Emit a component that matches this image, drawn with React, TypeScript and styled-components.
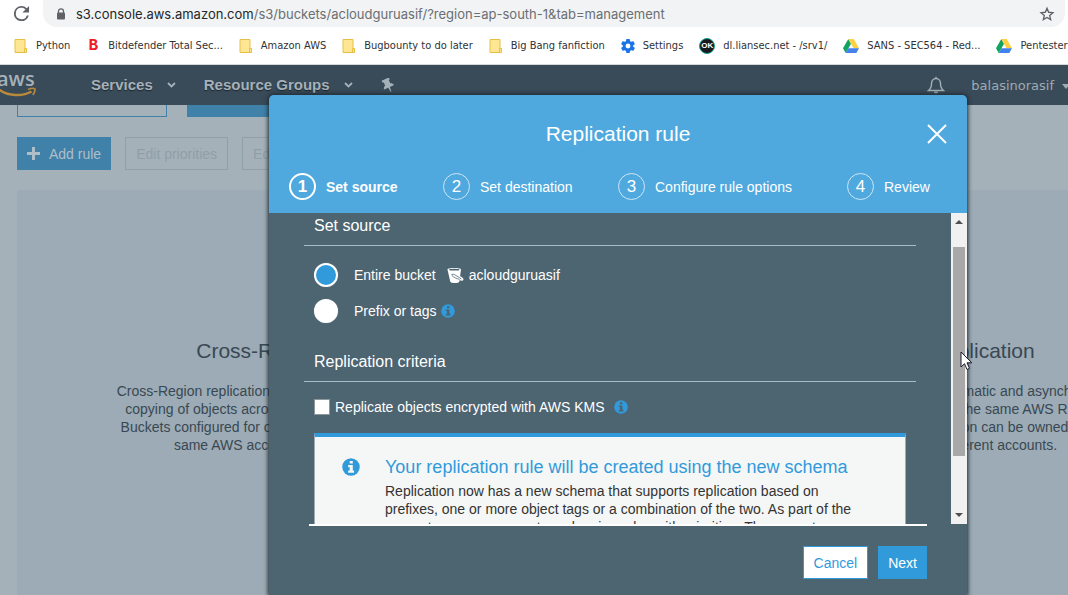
import React from "react";
import styled, { createGlobalStyle } from "styled-components";

const Global = createGlobalStyle`
  *, *::before, *::after { box-sizing: border-box; }
  html, body, #root { height: 100%; }
  body {
    margin: 0;
    overflow: hidden;
    font: 14px/18px "Liberation Sans", Arial, sans-serif;
  }
  h1, h2, h3, p, ul, ol { margin: 0; padding: 0; font-weight: 400; }
  button { font: inherit; cursor: pointer; }
`;

/* ---------- browser chrome ---------- */

const Browser = styled.div`
  display: flex;
  flex-direction: column;
  height: 100%;
  background: #fff;
  font-family: "DejaVu Sans Condensed", "Noto Sans", sans-serif;
`;
const AddressRow = styled.div`
  display: flex;
  align-items: center;
  flex: none;
  height: 27px;
  padding: 0 3px 0 12px;
  gap: 13px;
`;
const IconButton = styled.button`
  display: flex;
  padding: 0;
  border: 0;
  background: none;
  color: inherit;
`;
const AddressBar = styled.div`
  display: flex;
  align-items: center;
  flex: 1;
  height: 27px;
  padding: 0 10px 0 13px;
  gap: 10px;
  border-radius: 0 0 14px 14px;
  background: #f1f3f4;
`;
const Url = styled.div`
  flex: 1;
  white-space: nowrap;
  font-family: Inter, "Noto Sans", sans-serif;
  font-size: 13px;
  line-height: 20px;
  color: #6b6e72;
  b { font-weight: 400; color: #25272a; }
`;
const Bookmarks = styled.nav`
  display: flex;
  flex: none;
  align-items: center;
  height: 38px;
  padding-left: 14px;
  gap: 16px;
  border-bottom: 1px solid #d6d8da;
  overflow: hidden;
`;
const Bookmark = styled.a`
  display: flex;
  flex: none;
  align-items: center;
  gap: 8px;
  font-size: 11px;
  line-height: 16px;
  white-space: nowrap;
  color: #303236;
  text-decoration: none;
  svg { flex: none; }
`;

/* ---------- console page ---------- */

const Console = styled.div`
  position: relative;
  display: flex;
  flex: 1;
  flex-direction: column;
  min-height: 0;
  overflow: hidden;
  background: #a4b1b8;
  font-family: "Liberation Sans", Arial, sans-serif;
`;
const NavBar = styled.header`
  display: flex;
  flex: none;
  align-items: center;
  height: 40px;
  background: #394a58;
  color: #a5b1b9;
`;
const NavItem = styled.button`
  display: flex;
  align-items: center;
  padding: 0;
  gap: 14px;
  border: 0;
  background: none;
  color: inherit;
  font-size: 15px;
  font-weight: 700;
  text-shadow: 0 1px 1px #1d2630;
`;
const NavLinks = styled.nav`
  display: flex;
  align-items: center;
  flex: 1;
  margin-left: 54px;
  gap: 28px;
`;
const Account = styled.button`
  display: flex;
  align-items: center;
  margin: 2px -2px 0 26px;
  padding: 0;
  gap: 8px;
  border: 0;
  background: none;
  color: #9fabb3;
  font: 13px/18px "DejaVu Sans", sans-serif;
`;
const Content = styled.main`
  display: flex;
  flex: 1;
  flex-direction: column;
  min-height: 0;
  padding-left: 17px;
`;
const TabRow = styled.div`
  display: flex;
  flex: none;
  gap: 20px;
  height: 12px;
  margin-bottom: 20px;
`;
const TabStub = styled.div<{ $active?: boolean }>`
  width: 150px;
  border: 1px solid #3f81a8;
  border-top: 0;
  background: ${(p) => (p.$active ? "#3f81a8" : "transparent")};
`;
const Toolbar = styled.div`
  display: flex;
  flex: none;
  gap: 14px;
  margin-bottom: 20px;
`;
const PageButton = styled.button<{ $primary?: boolean }>`
  display: flex;
  align-items: center;
  height: 33px;
  padding: 0 10px;
  gap: 9px;
  border: ${(p) => (p.$primary ? "0" : "1px solid #909fa8")};
  background: ${(p) => (p.$primary ? "#3f81a8" : "transparent")};
  color: ${(p) => (p.$primary ? "#b0bec7" : "#909fa8")};
  white-space: nowrap;
`;
const EmptyPanel = styled.section`
  display: grid;
  grid-template-columns: 1fr 1fr;
  gap: 20px;
  flex: 1;
  width: 112%;
  min-width: 1197px;
  padding-top: 146px;
  border-radius: 4px 0 0 0;
  background: #9cabb5;
  color: #394853;
  text-align: center;
`;
const PanelTitle = styled.h2`
  margin-bottom: 16px;
  font-size: 21px;
  line-height: 30px;
`;
const PanelText = styled.p`
  white-space: pre-line;
`;

/* ---------- dialog ---------- */

const Dialog = styled.div`
  position: absolute;
  top: 30px;
  bottom: 0;
  left: 269px;
  right: 101px;
  display: flex;
  flex-direction: column;
  border-radius: 5px 5px 0 0;
  background: #4d6471;
  color: #fff;
  box-shadow: 0 0 4px 1px #1c2830;
`;
const DialogHead = styled.div`
  flex: none;
  height: 118px;
  padding: 23px 20px 0;
  border-radius: 5px 5px 0 0;
  background: #4fa9de;
`;
const TitleRow = styled.div`
  display: grid;
  grid-template-columns: 20px 1fr 20px;
  align-items: center;
  height: 32px;
  margin-bottom: 23px;
`;
const DialogTitle = styled.h1`
  grid-column: 2;
  font-size: 21px;
  line-height: 30px;
  text-align: center;
`;
const Steps = styled.ol`
  display: grid;
  grid-template-columns: 154px 175px 229px 1fr;
  list-style: none;
`;
const Step = styled.li<{ $current?: boolean }>`
  display: flex;
  align-items: center;
  gap: 10px;
  font-weight: ${(p) => (p.$current ? 700 : 400)};
`;
const StepNumber = styled.span<{ $current?: boolean }>`
  display: flex;
  align-items: center;
  justify-content: center;
  width: 27px;
  height: 27px;
  border: ${(p) => (p.$current ? "2px solid #fff" : "1px solid #cfe7f6")};
  border-radius: 50%;
  font-size: 17px;
`;
const ScrollArea = styled.div`
  display: flex;
  flex: none;
  height: 311px;
  overflow: hidden;
`;
const Form = styled.form`
  flex: 1;
  min-width: 0;
  padding: 0 35px;
`;
const SectionTitle = styled.h2<{ $first?: boolean }>`
  padding: ${(p) => (p.$first ? 3 : 29)}px 10px 9px;
  border-bottom: 1px solid #a9bcc4;
  font-size: 16px;
  line-height: 20px;
`;
const RadioList = styled.div`
  display: flex;
  flex-direction: column;
  gap: 12px;
  padding: 17px 10px 0;
`;
const Choice = styled.label`
  display: flex;
  align-items: center;
  height: 24px;
`;
const Radio = styled.input`
  appearance: none;
  width: 24px;
  height: 24px;
  margin: 0 16px 0 0;
  border: 2px solid #fff;
  border-radius: 50%;
  background: #fff;
  box-shadow: 0 0 1px #8b979e;
  &:checked { background: #319adb; }
`;
const BucketName = styled.span`
  display: flex;
  align-items: center;
  margin-left: 11px;
  gap: 5px;
`;
const KmsChoice = styled.label`
  display: flex;
  align-items: center;
  padding: 16px 10px 0;
`;
const Checkbox = styled.input`
  appearance: none;
  width: 16px;
  height: 16px;
  margin: 0 5px 0 0;
  border: 1px solid #8e979c;
  background: #fff;
`;
const InfoSlot = styled.span<{ $gap: number }>`
  display: flex;
  margin-left: ${(p) => p.$gap}px;
`;
const Notice = styled.section`
  display: flex;
  gap: 25px;
  margin: 17px 10px 0;
  padding: 20px 40px 20px 27px;
  border: 1px solid #a3abaf;
  border-top: 4px solid #319adb;
  background: #f5f7f6;
  color: #333;
  svg { flex: none; margin-top: 1px; }
`;
const NoticeTitle = styled.h3`
  margin-bottom: 5px;
  font-size: 18px;
  line-height: 20px;
  white-space: nowrap;
  color: #319adb;
`;
const NoticeText = styled.p`
  white-space: pre;
`;
const Scrollbar = styled.div`
  display: flex;
  flex: none;
  flex-direction: column;
  align-items: center;
  justify-content: space-between;
  width: 16px;
  background: #f1f1f1;
`;
const ScrollTrack = styled.div`
  display: flex;
  flex: 1;
  width: 12px;
  padding: 17px 0 51px;
`;
const ScrollThumb = styled.div`
  flex: 1;
  background: #a8a8a8;
`;
const DialogFoot = styled.footer`
  display: flex;
  flex: none;
  justify-content: flex-end;
  gap: 10px;
  margin: 0 40px;
  padding-top: 20px;
  border-top: 2px solid #fff;
`;
const FootButton = styled.button<{ $primary?: boolean }>`
  height: 33px;
  padding: 0 ${(p) => (p.$primary ? 9 : 10)}px;
  border: 1px solid #319adb;
  background: ${(p) => (p.$primary ? "#319adb" : "#fff")};
  color: ${(p) => (p.$primary ? "#fff" : "#319adb")};
`;
const Pointer = styled.svg`
  position: absolute;
  top: 286px;
  right: 95px;
`;

/* ---------- drawings ---------- */

const Folder = () => (
  <svg width="14" height="16" viewBox="0 0 14 16">
    <path d="M1 1.500h10v9h1.500v4H1z" fill="#ffe694" stroke="#e6c044" />
    <path d="M10.500 14v-3.500h2V14" fill="#ffe694" stroke="#e6c044" />
  </svg>
);
const Drive = () => (
  <svg width="16" height="14" viewBox="0 0 16 14">
    <path d="M5.300 0 0 9.300 2.700 14 8 4.700z" fill="#11a35f" />
    <path d="M5.300 0h5.400L16 9.300h-5.400z" fill="#ffcf44" />
    <path d="M5.400 9.300H16L13.300 14H2.700z" fill="#4381ee" />
  </svg>
);
const Gear = () => (
  <svg width="14" height="14" viewBox="2 2 20 20">
    <path
      fill="#1a73e8"
      fillRule="evenodd"
      d="M19.430 12.980c.04-.32.07-.64.07-.98s-.03-.66-.07-.98l2.110-1.650c.19-.15.24-.42.12-.64l-2-3.460c-.12-.22-.39-.3-.61-.22l-2.490 1c-.52-.4-1.080-.73-1.690-.98l-.38-2.650A.49.49 0 0 0 14 2h-4c-.25 0-.46.18-.49.42l-.38 2.650c-.61.25-1.170.59-1.690.98l-2.490-1c-.23-.09-.49 0-.61.22l-2 3.460c-.13.22-.07.49.12.64l2.110 1.650c-.04.32-.07.65-.07.98s.03.66.07.98l-2.110 1.650c-.19.15-.24.42-.12.64l2 3.460c.12.22.39.3.61.22l2.490-1c.52.4 1.080.73 1.690.98l.38 2.650c.03.24.24.42.49.42h4c.25 0 .46-.18.49-.42l.38-2.650c.61-.25 1.170-.59 1.690-.98l2.490 1c.23.09.49 0 .61-.22l2-3.460c.12-.22.07-.49-.12-.64zM12 15.500a3.500 3.500 0 1 1 0-7 3.500 3.500 0 0 1 0 7z"
    />
  </svg>
);
const BLetter = styled.span`
  width: 14px;
  font: 700 16px/16px "Liberation Mono", monospace;
  text-align: center;
  color: #ed1c24;
`;
const OkBadge = styled.span`
  display: flex;
  align-items: center;
  justify-content: center;
  width: 16px;
  height: 16px;
  border: 1px solid #16a596;
  border-radius: 50%;
  background: #17191d;
  color: #fff;
  font: 700 8px/10px "Liberation Sans", sans-serif;
`;
const Info = ({ size = 14, hole = "#4d6471" }: { size?: number; hole?: string }) => (
  <svg width={size} height={size} viewBox="0 0 14 14">
    <circle cx="7" cy="7" r="6.800" fill="#319adb" />
    <path d="M6 2.300h2.400v2H6zM4.800 5.500h3.600v4.300h1v1.600H4.800V9.800H6V7.100H4.800z" fill={hole} />
  </svg>
);
const Chevron = () => (
  <svg width="9" height="6" viewBox="0 0 9 6">
    <path d="M1 1l3.500 3.500L8 1" fill="none" stroke="currentColor" strokeWidth="1.800" />
  </svg>
);
const Reload = () => (
  <svg width="18" height="18" viewBox="2 3 19 19">
    <path
      fill="#5f6368"
      d="M17.650 6.350A7.960 7.960 0 0 0 12 4a8 8 0 1 0 7.730 10h-2.080A6 6 0 1 1 12 6c1.660 0 3.140.69 4.220 1.780L13 11h7V4z"
    />
  </svg>
);
const Lock = () => (
  <svg width="10" height="12" viewBox="0 0 10 12">
    <path d="M2.500 5V3.300a2.500 2.500 0 0 1 5 0V5" fill="none" stroke="#5f6368" strokeWidth="1.300" />
    <rect x="1" y="4.500" width="8" height="7" rx="1" fill="#5f6368" />
  </svg>
);
const Star = () => (
  <svg width="16" height="16" viewBox="0 0 24 24">
    <path
      d="M12 3.500l2.500 5.900 6.400.6-4.900 4.200 1.500 6.300-5.500-3.300-5.500 3.300L8 14.200 3.100 10l6.400-.6z"
      fill="none"
      stroke="#5f6368"
      strokeWidth="2"
    />
  </svg>
);
const Word = styled.text`
  font: 600 20px "Open Sans", sans-serif;
  fill: #a5b1b9;
`;
const AwsLogo = () => (
  <svg width="37" height="30" viewBox="0 0 37 30">
    <Word x="-3" y="16">aws</Word>
    <path d="M-1 19.500c9 7 24 7 32.500 2" fill="none" stroke="#b98a3c" strokeWidth="2.400" />
    <path d="M28 19.500c3-1.200 6-1.300 6.800-.6.500 1-.2 4-2 6" fill="none" stroke="#b98a3c" strokeWidth="1.700" />
  </svg>
);
const Pin = () => (
  <svg width="14" height="15" viewBox="0 0 14 15">
    <path
      transform="rotate(-25 7 7)"
      d="M3 .5h8v1.800l-1.200.7v3.300c1.600.6 2.500 1.500 2.700 3.200H7.900L7.300 14.500h-.6L6.100 9.500H1.500c.2-1.700 1.100-2.600 2.700-3.200V3L3 2.300z"
      fill="#a5b1b9"
    />
  </svg>
);
const Bell = () => (
  <svg width="18" height="18" viewBox="0 0 18 18">
    <path
      d="M1.500 14.500c2.500-2 3-3.500 3-7C4.500 4.500 6.500 2.500 9 2.500s4.500 2 4.500 5c0 3.500.5 5 3 7zM9 2.500V.8"
      fill="none"
      stroke="#a5b1b9"
      strokeWidth="1.400"
    />
    <path d="M6.800 15.500a2.200 2 0 0 0 4.400 0z" fill="#a5b1b9" />
  </svg>
);
const Plus = () => (
  <svg width="13" height="13" viewBox="0 0 13 13">
    <path d="M5 0h3v5h5v3H8v5H5V8H0V5h5z" fill="#b0bec7" />
  </svg>
);
const Bucket = () => (
  <svg width="17" height="17" viewBox="0 0 17 17">
    <path d="M0.500 2.500C.5 .5 14 .5 14 2.500L12.300 14.800c-.5 1.700-8.500 1.700-9 0z" fill="#fff" />
    <ellipse cx="7.300" cy="2.700" rx="5.200" ry=".9" fill="#4d6471" />
    <path
      d="M4.500 8c.5-1.200 2-.9 3.300-.2l4.900 2.900c1.300.8 1.600 1.900.3 1.700-3-.5-6.500-2-8.500-4.400z"
      fill="#fff"
      stroke="#4d6471"
      strokeWidth=".8"
    />
    <path d="M13 9.800c2.200 1.100 3.600 3 2 3.200-.8.100-1.800-.3-2.500-.5" fill="none" stroke="#fff" strokeWidth="1.500" />
  </svg>
);
const Cross = () => (
  <svg width="20" height="20" viewBox="0 0 20 20">
    <path d="M1 1l18 18M19 1L1 19" stroke="#fff" strokeWidth="2" />
  </svg>
);
const Arrow = ({ down }: { down?: boolean }) => (
  <svg width="16" height="17" viewBox="0 0 16 17">
    <path d={down ? "M4 6h8l-4 4z" : "M4 11h8L8 7z"} fill="#505050" />
  </svg>
);

const bookmarks: [React.ReactNode, string][] = [
  [<Folder />, "Python"],
  [<BLetter>B</BLetter>, "Bitdefender Total Sec..."],
  [<Folder />, "Amazon AWS"],
  [<Folder />, "Bugbounty to do later"],
  [<Folder />, "Big Bang fanfiction"],
  [<Gear />, "Settings"],
  [<OkBadge>OK</OkBadge>, "dl.liansec.net - /srv1/"],
  [<Drive />, "SANS - SEC564 - Red..."],
  [<Drive />, "Pentester"],
];
const steps = ["Set source", "Set destination", "Configure rule options", "Review"];

export default function App() {
  return (
    <Browser>
      <Global />
      <AddressRow>
        <IconButton aria-label="Reload"><Reload /></IconButton>
        <AddressBar>
          <Lock />
          <Url><b>s3.console.aws.amazon.com</b>/s3/buckets/acloudguruasif/?region=ap-south-1&amp;tab=management</Url>
          <IconButton aria-label="Bookmark this page"><Star /></IconButton>
        </AddressBar>
      </AddressRow>
      <Bookmarks>
        {bookmarks.map(([icon, label]) => (
          <Bookmark href="#" key={label}>{icon}{label}</Bookmark>
        ))}
      </Bookmarks>

      <Console>
        <NavBar>
          <AwsLogo />
          <NavLinks>
            <NavItem>Services <Chevron /></NavItem>
            <NavItem>Resource Groups <Chevron /></NavItem>
            <IconButton aria-label="Pin shortcuts"><Pin /></IconButton>
          </NavLinks>
          <IconButton aria-label="Notifications"><Bell /></IconButton>
          <Account>
            balasinorasif
            <svg width="8" height="5" viewBox="0 0 8 5"><path d="M0 0h8L4 5z" fill="currentColor" /></svg>
          </Account>
        </NavBar>

        <Content>
          <TabRow>
            <TabStub />
            <TabStub $active />
          </TabRow>
          <Toolbar>
            <PageButton $primary><Plus /> Add rule</PageButton>
            <PageButton disabled>Edit priorities</PageButton>
            <PageButton disabled>Edit global settings</PageButton>
          </Toolbar>
          <EmptyPanel>
            <div>
              <PanelTitle>Cross-Region replication</PanelTitle>
              <PanelText>{`Cross-Region replication enables automatic and asynchronous
                copying of objects across buckets in different AWS Regions.
                Buckets configured for object replication can be owned by the
                same AWS account or by different accounts.`}</PanelText>
            </div>
            <div>
              <PanelTitle>Same-Region replication</PanelTitle>
              <PanelText>{`Same-Region replication enables automatic and asynchronous
                copying of objects across buckets in the same AWS Region.
                Buckets configured for object replication can be owned by the
                same AWS account or by different accounts.`}</PanelText>
            </div>
          </EmptyPanel>
        </Content>

        <Dialog role="dialog" aria-label="Replication rule">
          <DialogHead>
            <TitleRow>
              <DialogTitle>Replication rule</DialogTitle>
              <IconButton aria-label="Close"><Cross /></IconButton>
            </TitleRow>
            <Steps>
              {steps.map((name, i) => (
                <Step key={name} $current={i === 0}>
                  <StepNumber $current={i === 0}>{i + 1}</StepNumber>
                  {name}
                </Step>
              ))}
            </Steps>
          </DialogHead>
          <ScrollArea>
            <Form>
              <SectionTitle $first>Set source</SectionTitle>
              <RadioList>
                <Choice>
                  <Radio type="radio" name="scope" defaultChecked />
                  Entire bucket
                  <BucketName><Bucket /> acloudguruasif</BucketName>
                </Choice>
                <Choice>
                  <Radio type="radio" name="scope" />
                  Prefix or tags
                  <InfoSlot $gap={5}><Info /></InfoSlot>
                </Choice>
              </RadioList>
              <SectionTitle>Replication criteria</SectionTitle>
              <KmsChoice>
                <Checkbox type="checkbox" />
                Replicate objects encrypted with AWS KMS
                <InfoSlot $gap={9}><Info /></InfoSlot>
              </KmsChoice>
              <Notice>
                <Info size={18} hole="#f5f7f6" />
                <div>
                  <NoticeTitle>Your replication rule will be created using the new schema</NoticeTitle>
                  <NoticeText>{`Replication now has a new schema that supports replication based on
prefixes, one or more object tags or a combination of the two. As part of the
support, you can now set overlapping rules with priorities. The current`}</NoticeText>
                </div>
              </Notice>
            </Form>
            <Scrollbar>
              <Arrow />
              <ScrollTrack><ScrollThumb /></ScrollTrack>
              <Arrow down />
            </Scrollbar>
          </ScrollArea>
          <DialogFoot>
            <FootButton>Cancel</FootButton>
            <FootButton $primary>Next</FootButton>
          </DialogFoot>
        </Dialog>
        <Pointer width="13" height="20" viewBox="0 0 13 20">
          <path d="M1 1v15l3.500-3.300L7 18.500l2.500-1.200L7 11.800h4.800z" fill="#fff" stroke="#1b1b2f" />
        </Pointer>
      </Console>
    </Browser>
  );
}
